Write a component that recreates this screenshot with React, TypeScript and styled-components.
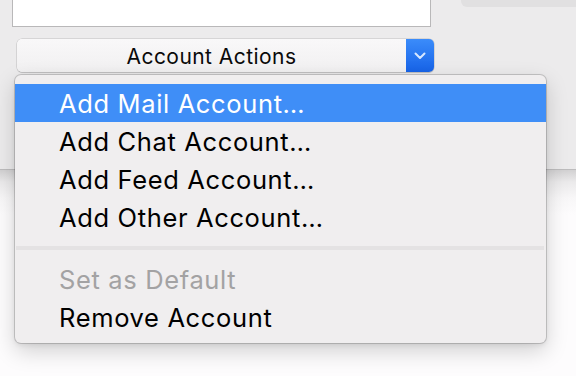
import React from "react";
import styled, { createGlobalStyle } from "styled-components";

const Global = createGlobalStyle`
  html, body { margin: 0; padding: 0; }
  body {
    width: 576px;
    height: 376px;
    overflow: hidden;
    background: #fdfcfd;
    font-family: Inter, "Liberation Sans", Arial, sans-serif;
    -webkit-font-smoothing: antialiased;
  }
`;

const Page = styled.div`
  position: relative;
  width: 576px;
  height: 376px;
  display: flex;
  flex-direction: column;
`;

const Window = styled.div`
  height: 170px;
  flex: none;
  box-sizing: border-box;
  background: #ecebec;
  border-bottom: 1px solid #bdbcbd;
  display: flex;
  align-items: flex-start;
`;

const LeftColumn = styled.div`
  display: flex;
  flex-direction: column;
  padding-left: 12px;
`;

const TextBox = styled.div`
  width: 419px;
  height: 37px;
  margin-top: -10px;
  box-sizing: border-box;
  background: #ffffff;
  border: 1px solid #b9b8b9;
`;

const PopupButton = styled.div`
  margin-top: 12px;
  margin-left: 5px;
  width: 417px;
  height: 33px;
  box-sizing: border-box;
  display: flex;
  border-radius: 5px;
  box-shadow: 0 0 0 0.5px rgba(0, 0, 0, 0.18), 0 1px 1px rgba(0, 0, 0, 0.12);
  overflow: hidden;
`;

const ButtonLabel = styled.div`
  flex: 1;
  display: flex;
  align-items: center;
  justify-content: center;
  background: linear-gradient(#f9f8f9, #f1f0f1);
  font-size: 21px;
  color: #0a0a0a;
  letter-spacing: 0.45px;
  padding-top: 2px;
`;

const ArrowBox = styled.div`
  width: 28px;
  display: flex;
  align-items: center;
  justify-content: center;
  background: linear-gradient(#3b8cfa, #1763e8);
`;

const TopTab = styled.div`
  margin-left: auto;
  width: 115px;
  height: 7px;
  background: #e1e0e1;
  border-bottom-left-radius: 6px;
`;

const Desktop = styled.div`
  flex: 1;
  background: linear-gradient(#d2d1d2 0px, #ebeaeb 12px, #f8f7f8 28px, #fdfcfd 45px);
`;

const Menu = styled.div`
  position: absolute;
  left: 15px;
  top: 75px;
  width: 531px;
  height: 268px;
  box-sizing: border-box;
  padding: 9px 0 7px;
  background: #f0eeef;
  border-radius: 6px;
  box-shadow: 0 0 0 1px rgba(0, 0, 0, 0.16), 0 8px 22px rgba(0, 0, 0, 0.18),
    0 2px 5px rgba(0, 0, 0, 0.08);
`;

const Item = styled.div<{ $active?: boolean; $disabled?: boolean }>`
  height: 38px;
  box-sizing: border-box;
  padding-left: 44px;
  padding-top: 1px;
  display: flex;
  align-items: center;
  font-size: 25.5px;
  letter-spacing: 0.64px;
  background: ${(p) => (p.$active ? "#3f8ef7" : "transparent")};
  color: ${(p) => (p.$active ? "#ffffff" : p.$disabled ? "#a3a2a3" : "#000000")};
`;

const Separator = styled.div`
  height: 24px;
  display: flex;
  align-items: center;
  padding: 0 2px 0 1px;
  &::after {
    content: "";
    flex: 1;
    height: 4px;
    background: #e4e2e3;
  }
`;

export default function App() {
  return (
    <>
      <Global />
      <Page>
        <Window>
          <LeftColumn>
            <TextBox />
            <PopupButton>
              <ButtonLabel>Account Actions</ButtonLabel>
              <ArrowBox>
                <svg width="12" height="8" viewBox="0 0 12 8">
                  <polyline
                    points="1.5,1.5 6,6 10.5,1.5"
                    fill="none"
                    stroke="#d8e8ff"
                    strokeWidth="2"
                    strokeLinecap="round"
                    strokeLinejoin="round"
                  />
                </svg>
              </ArrowBox>
            </PopupButton>
          </LeftColumn>
          <TopTab />
        </Window>
        <Desktop />
        <Menu>
          <Item $active>Add Mail Account…</Item>
          <Item>Add Chat Account…</Item>
          <Item>Add Feed Account…</Item>
          <Item>Add Other Account…</Item>
          <Separator />
          <Item $disabled>Set as Default</Item>
          <Item>Remove Account</Item>
        </Menu>
      </Page>
    </>
  );
}
